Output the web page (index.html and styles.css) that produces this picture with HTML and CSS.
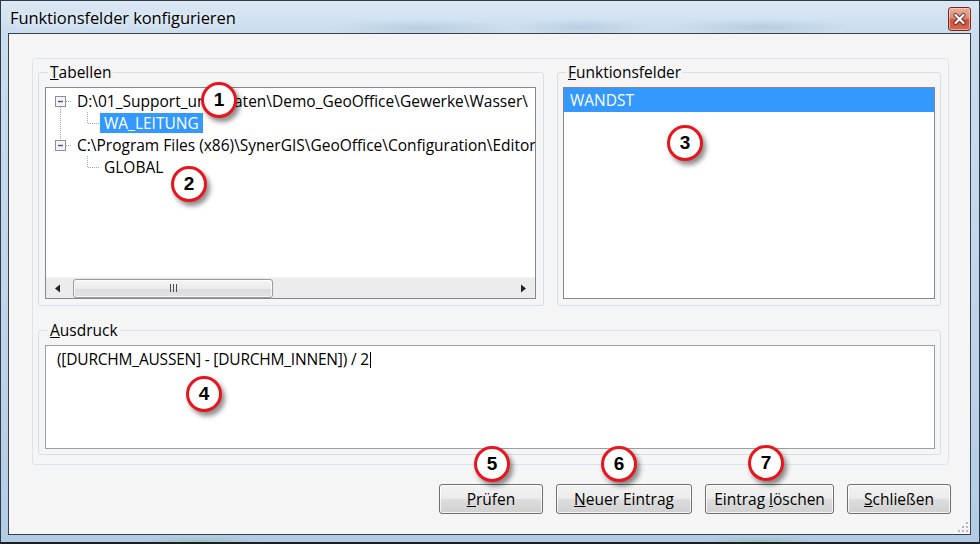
FILE: index.html
```html
<!DOCTYPE html>
<html lang="de">
<head>
<meta charset="utf-8">
<title>Funktionsfelder konfigurieren</title>
<link rel="stylesheet" href="styles.css">
</head>
<body>
<div class="window">
  <div class="titlebar">
    <span class="title">Funktionsfelder konfigurieren</span>
    <span class="close">
      <svg width="21" height="22" viewBox="0 0 21 22">
        <path d="M6.5 7 L14.5 15 M14.5 7 L6.5 15" stroke="#5a1c10" stroke-width="4.2" stroke-linecap="round" opacity="0.75"/>
        <path d="M6.5 7 L14.5 15 M14.5 7 L6.5 15" stroke="#ffffff" stroke-width="2.2" stroke-linecap="round"/>
      </svg>
    </span>
  </div>
  <div class="client">
    <div class="panel">
      <div class="top-row">
        <fieldset class="group">
          <legend><u>T</u>abellen</legend>
          <div class="tree">
            <div class="tree-view">
              <div class="node">
                <svg class="cell" width="28" height="22" viewBox="0 0 28 22">
                  <path d="M14.5 17V22 M20 11.5H26" class="dots"/>
                  <rect x="9.5" y="6.5" width="10" height="10" class="exp"/>
                  <path d="M12 11.5H17" class="minus"/>
                </svg>
                <span class="text">D:\01_Support_und_Daten\Demo_GeoOffice\Gewerke\Wasser\</span>
              </div>
              <div class="node">
                <svg class="cell" width="28" height="22" viewBox="0 0 28 22">
                  <path d="M14.5 0V22" class="dots"/>
                </svg>
                <svg class="cell-b" width="26" height="22" viewBox="0 0 26 22">
                  <path d="M13.5 0V11.5H26" class="dots"/>
                </svg>
                <span class="text sel">WA_LEITUNG</span>
              </div>
              <div class="node">
                <svg class="cell" width="28" height="22" viewBox="0 0 28 22">
                  <path d="M14.5 0V6 M20 11.5H26" class="dots"/>
                  <rect x="9.5" y="6.5" width="10" height="10" class="exp"/>
                  <path d="M12 11.5H17" class="minus"/>
                </svg>
                <span class="text">C:\Program Files (x86)\SynerGIS\GeoOffice\Configuration\Editor\</span>
              </div>
              <div class="node">
                <span class="cell blank"></span>
                <svg class="cell-b" width="26" height="22" viewBox="0 0 26 22">
                  <path d="M13.5 0V11.5H26" class="dots"/>
                </svg>
                <span class="text child">GLOBAL</span>
              </div>
            </div>
            <div class="hscroll">
              <span class="arrow">
                <svg width="8" height="9" viewBox="0 0 8 9"><path d="M6 0.5V8.5L1 4.5Z" fill="#222"/></svg>
              </span>
              <span class="track">
                <span class="thumb"><span class="grip-lines"></span></span>
              </span>
              <span class="arrow">
                <svg width="8" height="9" viewBox="0 0 8 9"><path d="M2 0.5V8.5L7 4.5Z" fill="#222"/></svg>
              </span>
            </div>
          </div>
        </fieldset>
        <fieldset class="group">
          <legend><u>F</u>unktionsfelder</legend>
          <div class="list">
            <div class="item sel">WANDST</div>
          </div>
        </fieldset>
      </div>
      <fieldset class="group expr">
        <legend><u>A</u>usdruck</legend>
        <div class="textbox">([DURCHM_AUSSEN] - [DURCHM_INNEN]) / 2<span class="caret"></span></div>
      </fieldset>
    </div>
    <div class="buttons">
      <span class="btn w-pruefen"><span><u>P</u>rüfen</span></span>
      <span class="btn w-neu"><span><u>N</u>euer Eintrag</span></span>
      <span class="btn w-loeschen"><span>Eintrag <u>l</u>öschen</span></span>
      <span class="btn w-schliessen"><span><u>S</u>chließen</span></span>
    </div>
    <svg class="sizegrip" width="12" height="12" viewBox="0 0 12 12">
      <g fill="#b8b8b8">
        <rect x="9" y="1" width="2" height="2"/>
        <rect x="5" y="5" width="2" height="2"/><rect x="9" y="5" width="2" height="2"/>
        <rect x="1" y="9" width="2" height="2"/><rect x="5" y="9" width="2" height="2"/><rect x="9" y="9" width="2" height="2"/>
      </g>
    </svg>
  </div>
  <span class="badge b1">1</span>
  <span class="badge b2">2</span>
  <span class="badge b3">3</span>
  <span class="badge b4">4</span>
  <span class="badge b5">5</span>
  <span class="badge b6">6</span>
  <span class="badge b7">7</span>
</div>
</body>
</html>
```

FILE: styles.css
```css
* { box-sizing: border-box; }

html, body {
  margin: 0;
  padding: 0;
}

body {
  width: 980px;
  height: 544px;
  overflow: hidden;
  font-family: "Open Sans", "Noto Sans", sans-serif;
  font-size: 15.5px;
  color: #000;
  background: #fff;
}

.window {
  position: relative;
  width: 980px;
  height: 544px;
  display: flex;
  flex-direction: column;
  border: 1px solid #2e3a46;
  border-bottom: 2px solid #1d1f22;
  background:
    radial-gradient(ellipse 90px 9px at 420px 27px, rgba(120, 145, 170, 0.22), transparent),
    radial-gradient(ellipse 70px 8px at 580px 26px, rgba(120, 145, 170, 0.22), transparent),
    radial-gradient(ellipse 90px 8px at 760px 26px, rgba(120, 145, 170, 0.25), transparent),
    radial-gradient(ellipse 60px 5px at 200px 540px, rgba(120, 175, 130, 0.35), transparent),
    radial-gradient(ellipse 60px 5px at 760px 540px, rgba(120, 175, 130, 0.35), transparent),
    linear-gradient(to bottom, #dbe8f4 0%, #cadcee 6%, #bfd4ea 60%, #b3cce6 100%);
}

.titlebar {
  flex: none;
  height: 32px;
  display: flex;
  align-items: flex-start;
  justify-content: space-between;
  padding: 0 8px 0 9px;
}

.title {
  margin-top: 6px;
  font-size: 16.5px;
  line-height: 22px;
  letter-spacing: -0.1px;
  text-shadow: 0 0 6px rgba(255, 255, 255, 0.95);
}

.close {
  margin-top: 6px;
  width: 23px;
  height: 24px;
  display: flex;
  align-items: center;
  justify-content: center;
  border: 1px solid #7a2a1d;
  border-radius: 3px;
  background: linear-gradient(to bottom, #eab0a2 0%, #dc8a76 45%, #c8533b 55%, #d56a50 100%);
  box-shadow: inset 0 0 0 1px rgba(255, 220, 210, 0.55);
}

.client {
  flex: 1;
  margin: 0 8px 7px 7px;
  border: 1px solid #3a4047;
  background: #f5f5f5;
  display: flex;
  flex-direction: column;
}

.panel {
  margin: 24px 21px 0 23px;
  border: 1px solid #dbe4eb;
  border-radius: 4px;
  padding: 5px 7px 9px 5px;
}

.top-row {
  display: grid;
  grid-template-columns: 506px 384px;
  column-gap: 13px;
}

.group {
  margin: 0;
  min-width: 0;
  border: 1px solid #d5dfe5;
  border-radius: 3px;
  padding: 6px 7px 6px 6px;
}

.top-row .group + .group {
  padding: 6px 5px 6px 5px;
}

legend {
  margin-left: 3px;
  padding: 0 2px;
  line-height: 17px;
  font-size: 15.5px;
}

.tree {
  height: 212px;
  border: 1px solid #828790;
  background: #fff;
  display: flex;
  flex-direction: column;
  overflow: hidden;
}

.tree-view {
  flex: 1;
  padding-top: 2px;
  overflow: hidden;
  white-space: nowrap;
}

.node {
  height: 22px;
  display: flex;
  align-items: center;
}

.cell {
  flex: none;
  width: 28px;
  height: 22px;
  display: block;
}

.cell-b {
  flex: none;
  display: block;
}

.dots {
  fill: none;
  stroke: #a5a5a5;
  stroke-width: 1;
  stroke-dasharray: 1 1;
}

.exp {
  fill: #f4f4f4;
  stroke: #8e8f8f;
  stroke-width: 1;
}

.minus {
  stroke: #3d5a8a;
  stroke-width: 1.4;
}

.text {
  padding-left: 3px;
  line-height: 20px;
}

.text.sel,
.text.child {
  padding: 0 4px;
  height: 20px;
}

.sel {
  background: #3399ff;
  color: #fff;
}

.hscroll {
  flex: none;
  height: 21px;
  display: flex;
  align-items: stretch;
  background: #ececec;
  border-top: 1px solid #f3f3f3;
}

.arrow {
  flex: none;
  width: 24px;
  display: flex;
  align-items: center;
  justify-content: center;
}

.track {
  flex: 1;
  display: flex;
  align-items: center;
  padding-left: 3px;
}

.thumb {
  width: 200px;
  height: 19px;
  border: 1px solid #9b9b9b;
  border-radius: 3px;
  background: linear-gradient(to bottom, #f4f4f4 0%, #ebebeb 50%, #dcdcdc 51%, #e2e2e2 100%);
  box-shadow: inset 0 0 0 1px rgba(255, 255, 255, 0.7);
  display: flex;
  align-items: center;
  justify-content: center;
}

.grip-lines {
  width: 7px;
  height: 8px;
  background: repeating-linear-gradient(to right, #4d4d4d 0, #4d4d4d 1px, transparent 1px, transparent 3px);
}

.list {
  height: 212px;
  border: 1px solid #828790;
  background: #fff;
  padding: 0;
}

.item {
  height: 24px;
  line-height: 24px;
  padding-left: 6px;
}

.expr {
  margin-top: 16px;
  padding: 6px 5px 5px 6px;
}

.textbox {
  height: 104px;
  border: 1px solid #9a9ea6;
  background: #fff;
  padding: 3px 11px;
  line-height: 20px;
  letter-spacing: -0.2px;
  white-space: nowrap;
}

.caret {
  display: inline-block;
  width: 1px;
  height: 16px;
  margin-left: 1px;
  background: #000;
  vertical-align: -3px;
}

.buttons {
  display: flex;
  justify-content: flex-end;
  gap: 13px;
  margin: 19px 19px 0 0;
}

.btn {
  height: 30px;
  display: flex;
  align-items: center;
  justify-content: center;
  border: 1px solid #707070;
  border-radius: 3px;
  background: linear-gradient(to bottom, #f3f3f3 0%, #ebebeb 48%, #dddddd 52%, #d1d1d1 100%);
  box-shadow: inset 0 0 0 1px rgba(255, 255, 255, 0.75);
  white-space: nowrap;
}

.w-pruefen { width: 104px; }
.w-neu { width: 136px; }
.w-loeschen { width: 129px; }
.w-schliessen { width: 104px; }

.sizegrip {
  align-self: flex-end;
  margin: auto 1px 1px 0;
  display: block;
}

.badge {
  position: absolute;
  width: 36px;
  height: 36px;
  border-radius: 50%;
  border: 3px solid #e8161c;
  background: #fff;
  display: flex;
  align-items: center;
  justify-content: center;
  font-family: "Liberation Sans", Arial, sans-serif;
  font-weight: bold;
  font-size: 19px;
  color: #000;
  box-shadow: 3px 4px 5px rgba(0, 0, 0, 0.45);
}

.b1 { left: 200px; top: 81px; }
.b2 { left: 170px; top: 165px; }
.b3 { left: 666px; top: 124px; }
.b4 { left: 185px; top: 375px; }
.b5 { left: 473px; top: 445px; }
.b6 { left: 600px; top: 445px; }
.b7 { left: 747px; top: 444px; }
```
